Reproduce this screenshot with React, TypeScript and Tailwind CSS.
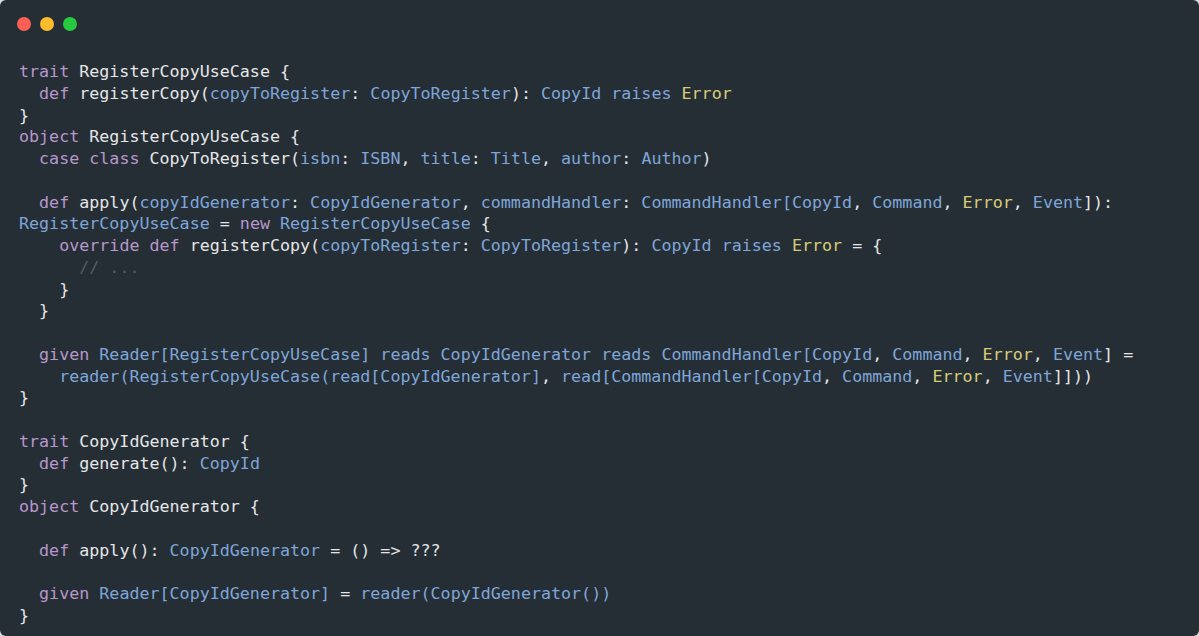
type Tok = [string, string]

const K = "text-[#b897cc]"
const B = "text-[#7ea6d9]"
const Y = "text-[#d8cb78]"
const C = "text-[#4f5d68]"
const W = "text-[#e4e6e8]"

const k = (s: string): Tok => [K, s]
const b = (s: string): Tok => [B, s]
const y = (s: string): Tok => [Y, s]
const c = (s: string): Tok => [C, s]
const w = (s: string): Tok => [W, s]

const lines: Tok[][] = [
  [k("trait"), w(" RegisterCopyUseCase {")],
  [w("  "), k("def"), w(" registerCopy("), b("copyToRegister"), w(": "), b("CopyToRegister"), w("): "), b("CopyId raises"), w(" "), y("Error")],
  [w("}")],
  [k("object"), w(" RegisterCopyUseCase {")],
  [w("  "), k("case class"), w(" CopyToRegister("), b("isbn"), w(": "), b("ISBN"), w(", "), b("title"), w(": "), b("Title"), w(", "), b("author"), w(": "), b("Author"), w(")")],
  [],
  [w("  "), k("def"), w(" apply("), b("copyIdGenerator"), w(": "), b("CopyIdGenerator"), w(", "), b("commandHandler"), w(": "), b("CommandHandler[CopyId"), w(", "), b("Command"), w(", "), y("Error"), w(", "), b("Event"), w("]):")],
  [b("RegisterCopyUseCase"), w(" = "), k("new"), b(" RegisterCopyUseCase"), w(" {")],
  [w("    "), k("override def"), w(" registerCopy("), b("copyToRegister"), w(": "), b("CopyToRegister"), w("): "), b("CopyId raises"), w(" "), y("Error"), w(" = {")],
  [w("      "), c("// ...")],
  [w("    }")],
  [w("  }")],
  [],
  [w("  "), k("given"), b(" Reader[RegisterCopyUseCase] reads CopyIdGenerator reads CommandHandler[CopyId"), w(", "), b("Command"), w(", "), y("Error"), w(", "), b("Event"), w("] =")],
  [w("    "), b("reader(RegisterCopyUseCase(read[CopyIdGenerator]"), w(", "), b("read[CommandHandler[CopyId"), w(", "), b("Command"), w(", "), y("Error"), w(", "), b("Event"), w("]]))")],
  [w("}")],
  [],
  [k("trait"), w(" CopyIdGenerator {")],
  [w("  "), k("def"), w(" generate(): "), b("CopyId")],
  [w("}")],
  [k("object"), w(" CopyIdGenerator {")],
  [],
  [w("  "), k("def"), w(" apply(): "), b("CopyIdGenerator"), w(" = () => ???")],
  [],
  [w("  "), k("given"), b(" Reader[CopyIdGenerator]"), w(" = "), b("reader(CopyIdGenerator())")],
  [w("}")],
]

export default function App() {
  return (
    <div className="w-[1199px] h-[636px] bg-[#d9dcdf] overflow-hidden">
      <div className="w-full h-full bg-[#262e35] rounded-[6px] flex flex-col">
        <div className="flex gap-[9px] pl-[17px] pt-[17px]">
          <span className="w-[14px] h-[14px] rounded-full bg-[#fd5f57]" />
          <span className="w-[14px] h-[14px] rounded-full bg-[#fdbb2e]" />
          <span className="w-[14px] h-[14px] rounded-full bg-[#28c840]" />
        </div>
        <pre
          className="mt-[30px] pl-[19px] text-[16.68px] leading-[21.76px] whitespace-pre"
          style={{ fontFamily: '"DejaVu Sans Mono", "Liberation Mono", monospace' }}
        >
          {lines.map((line, i) => (
            <div key={i} className="h-[21.76px]">
              {line.map(([cls, text], j) => (
                <span key={j} className={cls}>
                  {text}
                </span>
              ))}
            </div>
          ))}
        </pre>
      </div>
    </div>
  )
}
